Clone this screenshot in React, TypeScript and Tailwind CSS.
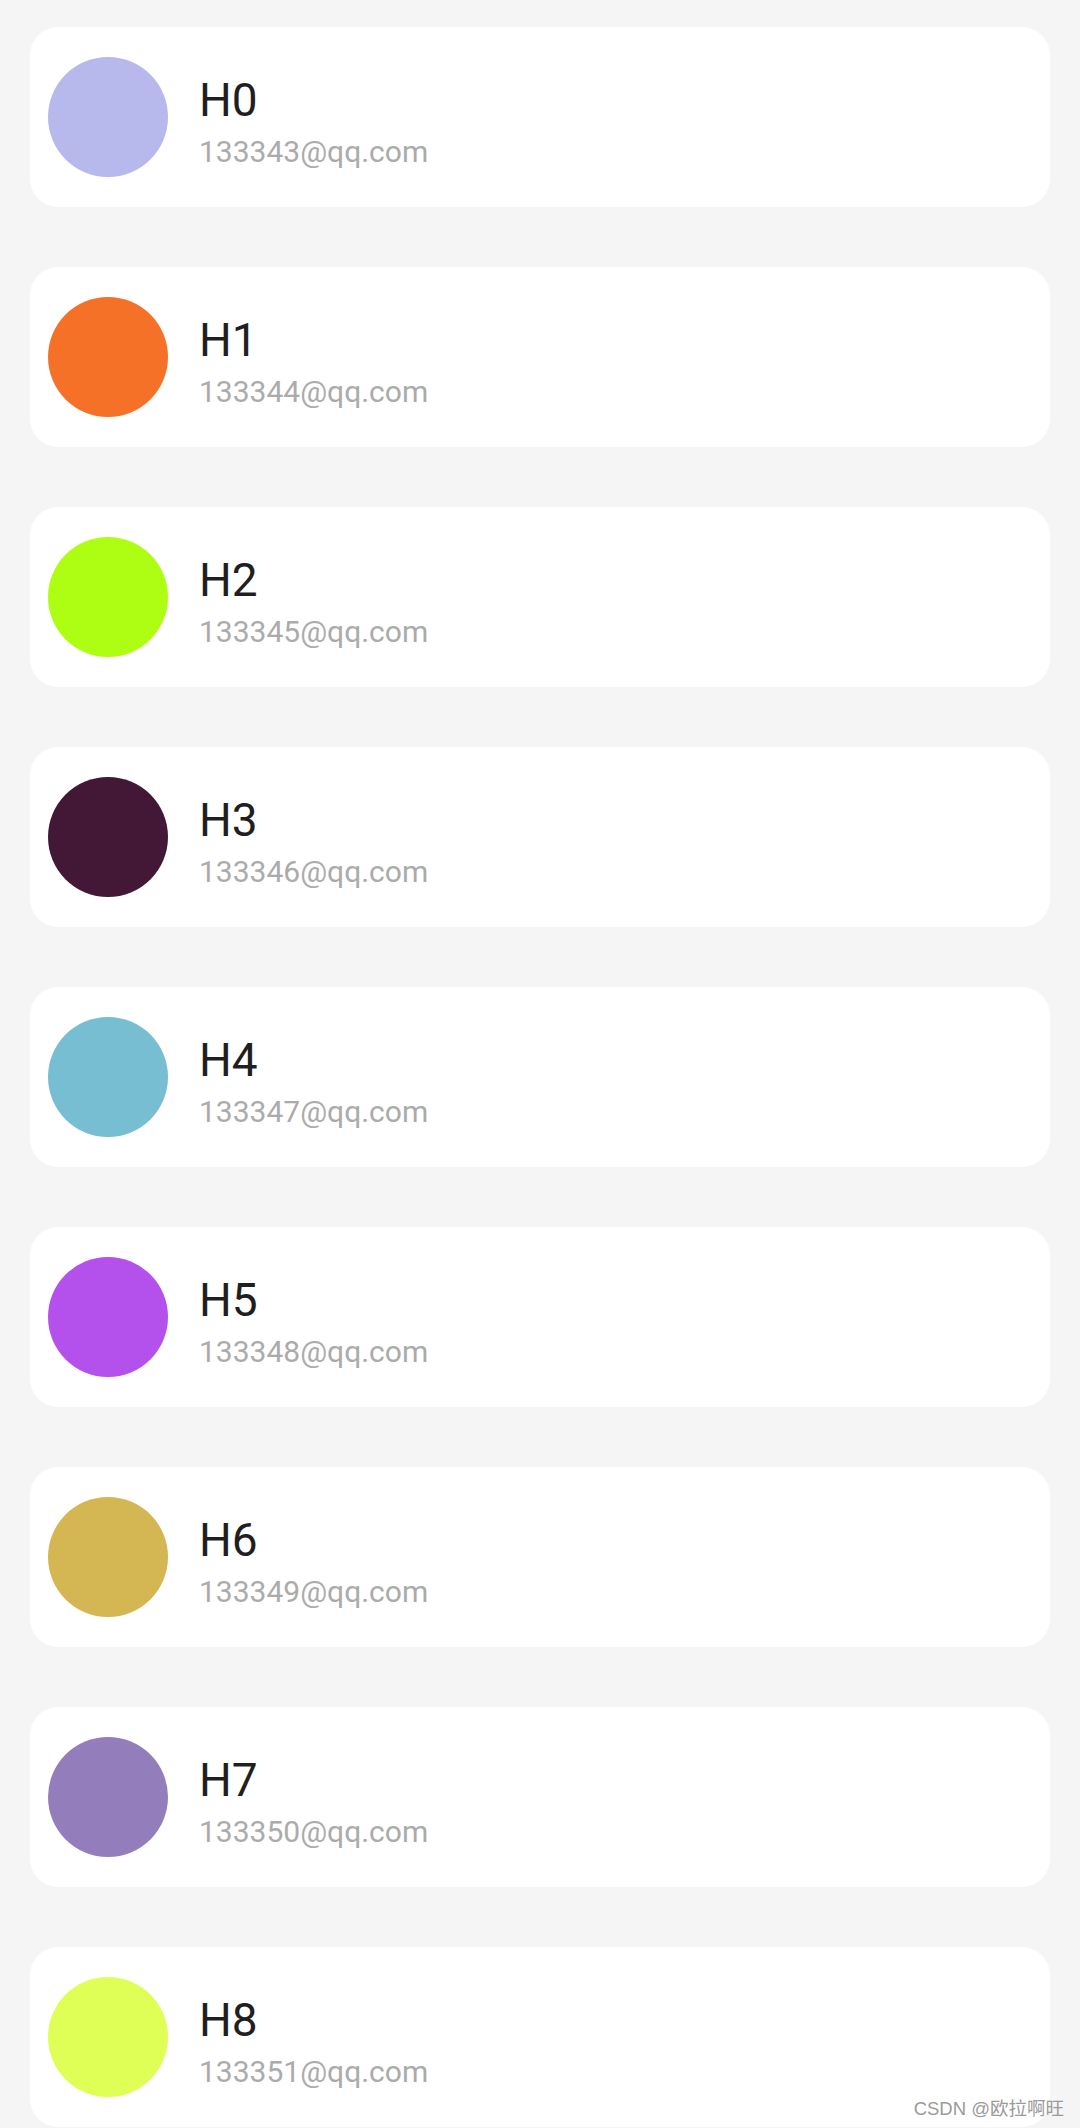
const contacts = [
  { name: "H0", email: "133343@qq.com", color: "bg-[#b7b8ec]" },
  { name: "H1", email: "133344@qq.com", color: "bg-[#f67128]" },
  { name: "H2", email: "133345@qq.com", color: "bg-[#aefe14]" },
  { name: "H3", email: "133346@qq.com", color: "bg-[#431837]" },
  { name: "H4", email: "133347@qq.com", color: "bg-[#77bed2]" },
  { name: "H5", email: "133348@qq.com", color: "bg-[#b450ec]" },
  { name: "H6", email: "133349@qq.com", color: "bg-[#d4b652]" },
  { name: "H7", email: "133350@qq.com", color: "bg-[#937dbb]" },
  { name: "H8", email: "133351@qq.com", color: "bg-[#dfff57]" },
];

const App = () => {
  return (
    <div
      className="relative h-[2128px] overflow-hidden bg-[#f5f5f5] px-[30px] pt-[27px]"
      style={{ fontFamily: "Roboto, 'Noto Sans', sans-serif" }}
    >
      <div className="flex flex-col gap-[60px]">
        {contacts.map((c) => (
          <div key={c.name} className="flex h-[180px] items-center rounded-[28px] bg-white px-[18px]">
            {/* Avatar */}
            <div className={`h-[120px] w-[120px] shrink-0 rounded-full ${c.color}`} />
            {/* Name + email */}
            <div className="ml-[31px] flex flex-col pt-[10px]">
              <span className="text-[46px] leading-[54px] text-[#1f1f1f]">{c.name}</span>
              <span className="mt-[5px] text-[30px] leading-[40px] text-[#ababab]">{c.email}</span>
            </div>
          </div>
        ))}
      </div>

      {/* Watermark */}
      <div
        className="absolute bottom-[8px] right-[16px] text-[18.5px] leading-[22px] text-[#9a9a9a]"
        style={{ fontFamily: "'Liberation Sans', 'Noto Sans CJK SC', sans-serif" }}
      >
        CSDN @欧拉啊旺
      </div>
    </div>
  );
};

export default App;
